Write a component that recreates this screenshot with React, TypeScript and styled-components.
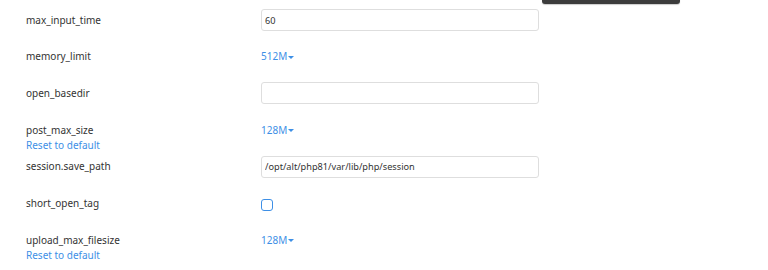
import React from "react";
import styled, { createGlobalStyle } from "styled-components";

const Global = createGlobalStyle`
  html, body { margin: 0; padding: 0; background: #fff; }
  body { font-family: "Noto Sans", "Open Sans", sans-serif; color: #333; }
`;

const Page = styled.div`
  position: relative;
  width: 768px;
  height: 270px;
  overflow: hidden;
  background: #fff;
`;

const List = styled.div`
  display: flex;
  flex-direction: column;
  padding-left: 26px;
`;

const Row = styled.div`
  display: grid;
  grid-template-columns: 235px 278px;
  align-items: start;
  height: 36.7px;
  padding-top: 9px;
  box-sizing: border-box;
`;

const LabelCol = styled.div`
  display: flex;
  flex-direction: column;
  padding-top: 3.5px;
  font-size: 10px;
  line-height: 15px;
`;

const Label = styled.span`
  color: #333;
`;

const Reset = styled.a`
  color: #3d8fe6;
  text-decoration: none;
  cursor: pointer;
`;

const ValueCol = styled.div`
  display: flex;
  align-items: center;
  min-height: 22px;
`;

const TextInput = styled.input`
  box-sizing: border-box;
  width: 278px;
  height: 22px;
  border: 1px solid #dedede;
  border-radius: 3px;
  padding: 0 3px;
  font-family: "Noto Sans", "Open Sans", sans-serif;
  font-size: 9.2px;
  color: #333;
  outline: none;
  background: #fff;
`;

const Dropdown = styled.span`
  display: inline-flex;
  align-items: center;
  color: #3d8fe6;
  font-size: 10px;
  line-height: 15px;
  cursor: pointer;
`;

const Caret = styled.span`
  width: 0;
  height: 0;
  border-left: 3px solid transparent;
  border-right: 3px solid transparent;
  border-top: 3px solid #3d8fe6;
  margin-left: 1px;
  margin-top: 1px;
`;

const Check = styled.span`
  display: inline-block;
  box-sizing: border-box;
  width: 12px;
  height: 12px;
  border: 1.5px solid #3d8fe6;
  border-radius: 3px;
  margin-top: 3px;
`;

const Tooltip = styled.div`
  position: absolute;
  top: -10px;
  left: 542px;
  width: 138px;
  height: 14px;
  background: #3c3c3c;
  border-radius: 0 0 3px 3px;
  box-shadow: 0 1px 1px rgba(0, 0, 0, 0.2);
`;

type Setting =
  | { name: string; kind: "text"; value: string }
  | { name: string; kind: "select"; value: string; reset?: boolean }
  | { name: string; kind: "check" };

const settings: Setting[] = [
  { name: "max_input_time", kind: "text", value: "60" },
  { name: "memory_limit", kind: "select", value: "512M" },
  { name: "open_basedir", kind: "text", value: "" },
  { name: "post_max_size", kind: "select", value: "128M", reset: true },
  { name: "session.save_path", kind: "text", value: "/opt/alt/php81/var/lib/php/session" },
  { name: "short_open_tag", kind: "check" },
  { name: "upload_max_filesize", kind: "select", value: "128M", reset: true },
];

export default function App() {
  return (
    <Page>
      <Global />
      <List>
        {settings.map((s) => (
          <Row key={s.name}>
            <LabelCol>
              <Label>{s.name}</Label>
              {s.kind === "select" && s.reset && <Reset>Reset to default</Reset>}
            </LabelCol>
            <ValueCol>
              {s.kind === "text" && <TextInput defaultValue={s.value} />}
              {s.kind === "select" && (
                <Dropdown>
                  {s.value}
                  <Caret />
                </Dropdown>
              )}
              {s.kind === "check" && <Check />}
            </ValueCol>
          </Row>
        ))}
      </List>
      <Tooltip />
    </Page>
  );
}
